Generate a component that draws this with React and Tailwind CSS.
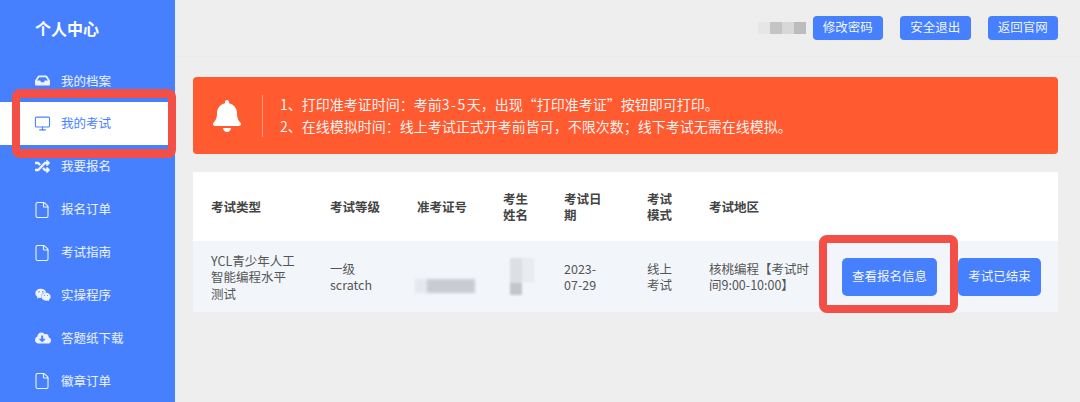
import { File, Monitor } from 'lucide-react';
import { FaBell, FaCloudDownloadAlt, FaInbox, FaRandom, FaWeixin } from 'react-icons/fa';

const fileIcon = { icon: File, size: 18, strokeWidth: 1.5, offset: '-ml-[2px]' };

const menuItems = [
  { label: '我的档案', icon: FaInbox, size: 15 },
  { label: '我的考试', icon: Monitor, size: 17, strokeWidth: 1.5, offset: '-ml-[1px]', active: true },
  { label: '我要报名', icon: FaRandom, size: 15 },
  { label: '报名订单', ...fileIcon },
  { label: '考试指南', ...fileIcon },
  { label: '实操程序', icon: FaWeixin, size: 16 },
  { label: '答题纸下载', icon: FaCloudDownloadAlt, size: 16 },
  { label: '徽章订单', ...fileIcon },
];

const topButtons = ['修改密码', '安全退出', '返回官网'];

function Sidebar() {
  return (
    <aside className="w-[175px] shrink-0 bg-[#4680ff] text-white">
      <h1 className="flex h-[59.5px] items-center pb-[4px] pl-[35px] text-base font-bold">个人中心</h1>
      <ul>
        {menuItems.map(({ label, icon: Icon, size, strokeWidth, offset, active }) => (
          <li
            key={label}
            className={`flex h-[42.9px] items-center pl-[35px] text-[12.5px] ${active ? 'bg-white text-[#4680ff]' : 'text-white/90'}`}
          >
            <span className="flex w-[26px] shrink-0">
              <Icon size={size} strokeWidth={strokeWidth} className={offset} />
            </span>
            {label}
          </li>
        ))}
      </ul>
    </aside>
  );
}

function Header() {
  return (
    <header className="flex h-[57px] items-center justify-end gap-[17px] border-b border-[#ebebeb] pr-[22px] pb-[1px]">
      <div className="mr-[-11px] flex h-3 w-12 -translate-x-[1px] blur-[0.5px]">
        <div className="flex-1 bg-[#e6e6e6]" />
        <div className="flex-1 bg-[#c4c4c4]" />
        <div className="flex-1 bg-[#d8d8d8]" />
        <div className="flex-1 bg-[#bcbcbc]" />
      </div>
      {topButtons.map((label) => (
        <button key={label} className="h-6 w-[70.5px] rounded-[4px] bg-[#4680ff] text-[12.5px] text-white/95">
          {label}
        </button>
      ))}
    </header>
  );
}

function Notice() {
  return (
    <section className="ml-[18px] mr-[22px] mt-5 flex h-[77px] items-center rounded-[4px] bg-[#ff5a30] text-sm text-white/95">
      <FaBell className="ml-[18px] shrink-0 text-white" size={32} />
      <div className="ml-[19px] mr-[17px] h-[42px] w-px bg-white/40" />
      <div className="pb-[2px] leading-[22px]">
        <p>
          1、打印准考证时间：考前<span className="tracking-[1.5px]">3-5</span>天，出现“打印准考证”按钮即可打印。
        </p>
        <p>2、在线模拟时间：线上考试正式开考前皆可，不限次数；线下考试无需在线模拟。</p>
      </div>
    </section>
  );
}

function ExamTable() {
  const th = 'px-[18px] pt-[1px] text-left align-middle text-[12.5px] font-bold leading-[16.5px] text-[#444]';
  const td = 'px-[18px] align-middle text-[12.5px] leading-[16.5px] text-[#555]';

  return (
    <section className="ml-[18px] mr-[22px] mt-[18px] bg-white">
      <table className="w-full table-fixed border-collapse">
        <colgroup>
          <col className="w-[119px]" />
          <col className="w-[87px]" />
          <col className="w-[86px]" />
          <col className="w-[61px]" />
          <col className="w-[83px]" />
          <col className="w-[62px]" />
          <col className="w-[133px]" />
          <col />
        </colgroup>
        <thead>
          <tr className="h-[69px]">
            <th className={th}>考试类型</th>
            <th className={th}>考试等级</th>
            <th className={th}>准考证号</th>
            <th className={th}>考生姓名</th>
            <th className={th}>考试日期</th>
            <th className={th}>考试模式</th>
            <th className={th}>考试地区</th>
            <th className={th}></th>
          </tr>
        </thead>
        <tbody>
          <tr className="h-[71px] bg-[#f2f6fa]">
            <td className={`${td} whitespace-nowrap pt-[2px]`}>YCL青少年人工<br />智能编程水平<br />测试</td>
            <td className={`${td} pt-[1px]`}>一级<br />scratch</td>
            <td className={td}>
              <div className="ml-[-2px] mt-[18px] flex h-[14px] w-[60px] blur-[1.5px]">
                <div className="w-3 bg-[#e4e8ec]" />
                <div className="flex-1 bg-[#c8ccd2]" />
              </div>
            </td>
            <td className={td}>
              <div className="ml-[7px] flex h-[37px] w-[24px] blur-[1px]">
                <div className="flex w-3 flex-col">
                  <div className="flex-[2] bg-[#dcdfe3]" />
                  <div className="flex-1 bg-[#c4c6c9]" />
                </div>
                <div className="h-6 w-3 bg-[#e8ebef]" />
              </div>
            </td>
            <td className={`${td} break-words pt-[1px]`}>2023-07-29</td>
            <td className={`${td} pt-[1px]`}>线上考试</td>
            <td className={`${td} whitespace-nowrap pt-[1px]`}>核桃编程【考试时<br />间9:00-10:00】</td>
            <td className={`${td} whitespace-nowrap`}>
              <div className="flex gap-[21px]">
                <button className="h-[38px] w-[95px] shrink-0 rounded-[5px] bg-[#4680ff] text-[12.5px] text-white/95">查看报名信息</button>
                <button className="h-[38px] w-[83px] shrink-0 rounded-[5px] bg-[#4680ff] text-[12.5px] text-white/95">考试已结束</button>
              </div>
            </td>
          </tr>
        </tbody>
      </table>
    </section>
  );
}

export default function App() {
  return (
    <div
      className="relative flex h-[402px] w-[1080px] overflow-hidden bg-[#eeeeee]"
      style={{ fontFamily: '"Noto Sans CJK SC", "Noto Sans", sans-serif' }}
    >
      <Sidebar />
      <main className="min-w-0 flex-1">
        <Header />
        <Notice />
        <ExamTable />
      </main>
      {/* red annotation boxes drawn over the page */}
      <div className="absolute left-[12px] top-[89px] h-[69px] w-[164px] rounded-[8px] border-x-[8px] border-y-[9px] border-[#f44f47]" />
      <div className="absolute left-[819px] top-[235px] h-[78px] w-[139px] rounded-[8px] border-[8px] border-[#f44f47]" />
    </div>
  );
}
